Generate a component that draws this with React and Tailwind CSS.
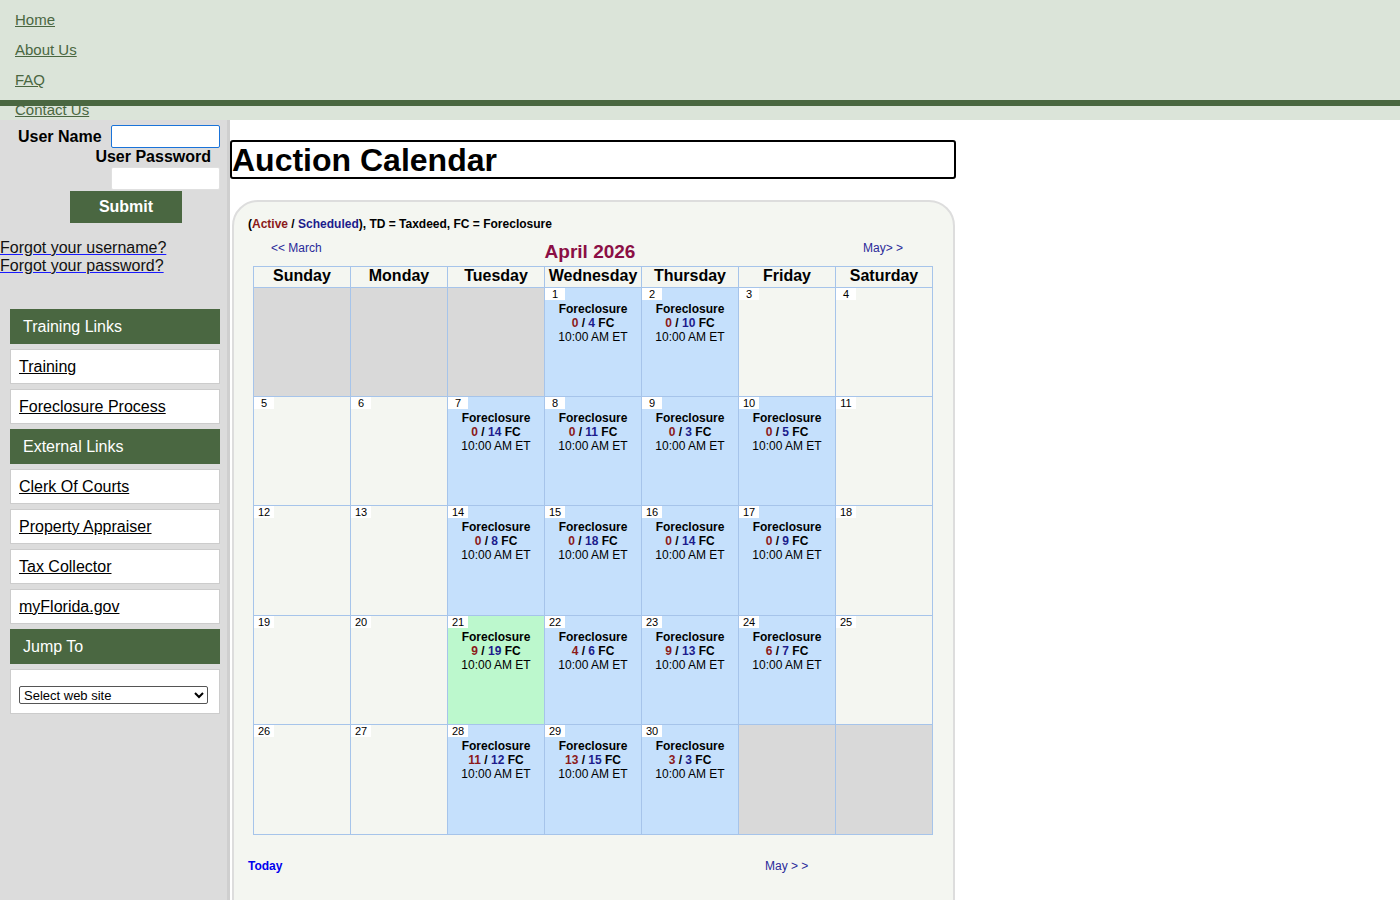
import React from 'react';

const dias = ['Sunday', 'Monday', 'Tuesday', 'Wednesday', 'Thursday', 'Friday', 'Saturday'];

// eventos do mes: dia -> [ativos, agendados]
const eventos = {
    1: [0, 4], 2: [0, 10],
    7: [0, 14], 8: [0, 11], 9: [0, 3], 10: [0, 5],
    14: [0, 8], 15: [0, 18], 16: [0, 14], 17: [0, 9],
    21: [9, 19], 22: [4, 6], 23: [9, 13], 24: [6, 7],
    28: [11, 12], 29: [13, 15], 30: [3, 3],
};

const hoje = 21;

// alturas das linhas (a tabela original nao tem todas iguais)
const alturas = ['h-[109px]', 'h-[109px]', 'h-[110px]', 'h-[109px]', 'h-[110px]'];

const montarSemanas = () => {
    const celulas = [null, null, null];
    for (let d = 1; d <= 30; d++) celulas.push(d);
    while (celulas.length % 7) celulas.push(null);
    const semanas = [];
    for (let i = 0; i < celulas.length; i += 7) semanas.push(celulas.slice(i, i + 7));
    return semanas;
};

const Celula = ({ dia, altura }) => {
    if (dia === null) {
        return <td className={altura + " border border-[#a6c4ea] bg-[#d9d9d9] w-[97px] p-0"}></td>;
    }
    const ev = eventos[dia];
    let fundo = 'bg-[#f4f6f1]';
    if (ev) fundo = 'bg-[#c5e0fc]';
    if (dia === hoje) fundo = 'bg-[#bcf8cd]';
    return (
        <td className={fundo + " " + altura + " border border-[#a6c4ea] w-[97px] p-0 align-top"}>
            <div className="flex flex-col">
                <div className="bg-white w-[20px] h-[12px] text-[11px] leading-[12px] text-center text-black">{dia}</div>
                {ev && (
                    <div className="text-center text-[12px] leading-[14px] mt-[2px] text-black">
                        <div className="font-bold">Foreclosure</div>
                        <div className="font-bold">
                            <span className="text-[#8b1a1a]">{ev[0]}</span> / <span className="text-[#1c1c8c]">{ev[1]}</span> FC
                        </div>
                        <div>10:00 AM ET</div>
                    </div>
                )}
            </div>
        </td>
    );
};

const CabecalhoMenu = ({ children }) => (
    <div className="mt-[5px] h-[35px] bg-[#4a6741] text-white text-[16px] flex items-center pl-[13px]">{children}</div>
);

const ItemMenu = ({ children }) => (
    <div className="mt-[5px] h-[35px] bg-white border border-[#cccccc] flex items-center pl-[8px]">
        <a href="#" className="text-[16px] text-black underline">{children}</a>
    </div>
);

export default function App() {
    const semanas = montarSemanas();

    return (
        <div className="font-['Liberation_Sans',Arial,sans-serif] bg-white min-h-[900px]">
            <div className="bg-[#dbe4d9] h-[120px] flex flex-col">
                <div className="h-[100px] pl-[15px] pt-[5px] flex flex-col">
                    {['Home', 'About Us', 'FAQ', 'Contact Us'].map((l) => (
                        <a key={l} href="#" className="text-[15px] leading-[30px] h-[30px] text-[#4a6741] underline w-fit relative z-10">{l}</a>
                    ))}
                </div>
                <div className="h-[6px] bg-[#4a6741]"></div>
            </div>

            <div className="flex">
                <div className="w-[230px] shrink-0 bg-[#dcdcdc] border-r-[3px] border-[#cfcfcf] min-h-[800px]">
                    <div className="pt-[5px]">
                        <div className="flex items-center h-[23px]">
                            <span className="ml-[18px] text-[16px] font-bold text-black">User Name</span>
                            <input className="ml-[9px] w-[109px] h-[23px] bg-white border border-[#1a73d9] rounded-[2px] outline-none" />
                        </div>
                        <div className="text-right pr-[16px] text-[16px] font-bold leading-[18px] text-black">User Password</div>
                        <input type="password" className="block mt-[1px] ml-[111px] w-[109px] h-[23px] bg-white border border-[#e0e0e0] rounded-[2px]" />
                        <button className="block mt-[1px] ml-[70px] w-[112px] h-[32px] bg-[#4a6741] text-white font-bold text-[16px]">Submit</button>
                    </div>
                    <div className="mt-[16px] text-[16px] leading-[18px]">
                        <a href="#" className="block text-[#111] underline decoration-[#1a1aff]">Forgot your username?</a>
                        <a href="#" className="block text-[#111] underline decoration-[#1a1aff]">Forgot your password?</a>
                    </div>
                    <div className="ml-[10px] w-[210px] mt-[34px]">
                        <CabecalhoMenu>Training Links</CabecalhoMenu>
                        <ItemMenu>Training</ItemMenu>
                        <ItemMenu>Foreclosure Process</ItemMenu>
                        <CabecalhoMenu>External Links</CabecalhoMenu>
                        <ItemMenu>Clerk Of Courts</ItemMenu>
                        <ItemMenu>Property Appraiser</ItemMenu>
                        <ItemMenu>Tax Collector</ItemMenu>
                        <ItemMenu>myFlorida.gov</ItemMenu>
                        <CabecalhoMenu>Jump To</CabecalhoMenu>
                        <div className="mt-[5px] h-[45px] bg-white border border-[#cccccc] flex items-center pl-[8px] pt-[6px]">
                            <select className="w-[189px] h-[18px] text-[13px] border border-[#555] rounded-[2px] bg-white text-black">
                                <option>Select web site</option>
                            </select>
                        </div>
                    </div>
                </div>

                <div className="flex-1">
                    <div className="mt-[20px] w-[726px] h-[39px] border-2 border-black rounded-[3px] flex items-center">
                        <h1 className="text-[32px] font-bold leading-[36px] text-black">Auction Calendar</h1>
                    </div>

                    <div className="mt-[21px] ml-[2px] w-[723px] min-h-[720px] bg-[#f4f6f1] border-2 border-[#dddddd] rounded-t-[26px] pt-[14px] pb-[40px]">
                        <div className="ml-[14px] text-[12px] font-bold text-black leading-[16px]">
                            (<span className="text-[#8b1a1a]">Active</span> / <span className="text-[#1c1c8c]">Scheduled</span>), TD = Taxdeed, FC = Foreclosure
                        </div>

                        <div className="ml-[19px] w-[680px] grid grid-cols-3 items-end mt-[7px] h-[27px]">
                            <a href="#" className="pl-[18px] text-[12px] text-[#2a2a9a] leading-[18px] self-start">&lt;&lt; March</a>
                            <div className="text-center text-[19px] font-bold text-[#8b0f45] leading-[25px] mr-[6px] mb-[2px]">April 2026</div>
                            <a href="#" className="text-right pr-[30px] text-[12px] text-[#2a2a9a] leading-[18px] self-start">May&gt; &gt;</a>
                        </div>

                        <table className="ml-[19px] w-[680px] border-collapse table-fixed">
                            <thead>
                                <tr>
                                    {dias.map((d) => (
                                        <th key={d} className="border border-[#a6c4ea] h-[21px] text-[16px] font-bold text-black leading-[18px] pt-0 pb-[2px] px-0 text-center">{d}</th>
                                    ))}
                                </tr>
                            </thead>
                            <tbody>
                                {semanas.map((semana, i) => (
                                    <tr key={i}>
                                        {semana.map((dia, j) => (
                                            <Celula key={j} dia={dia} altura={alturas[i]} />
                                        ))}
                                    </tr>
                                ))}
                            </tbody>
                        </table>

                        <div className="flex mt-[23px] ml-[14px] text-[12px] leading-[16px]">
                            <a href="#" className="w-[517px] font-bold text-[#0000ee]">Today</a>
                            <a href="#" className="text-[#2a2a9a]">May &gt; &gt;</a>
                        </div>
                    </div>
                </div>
            </div>
        </div>
    );
}
